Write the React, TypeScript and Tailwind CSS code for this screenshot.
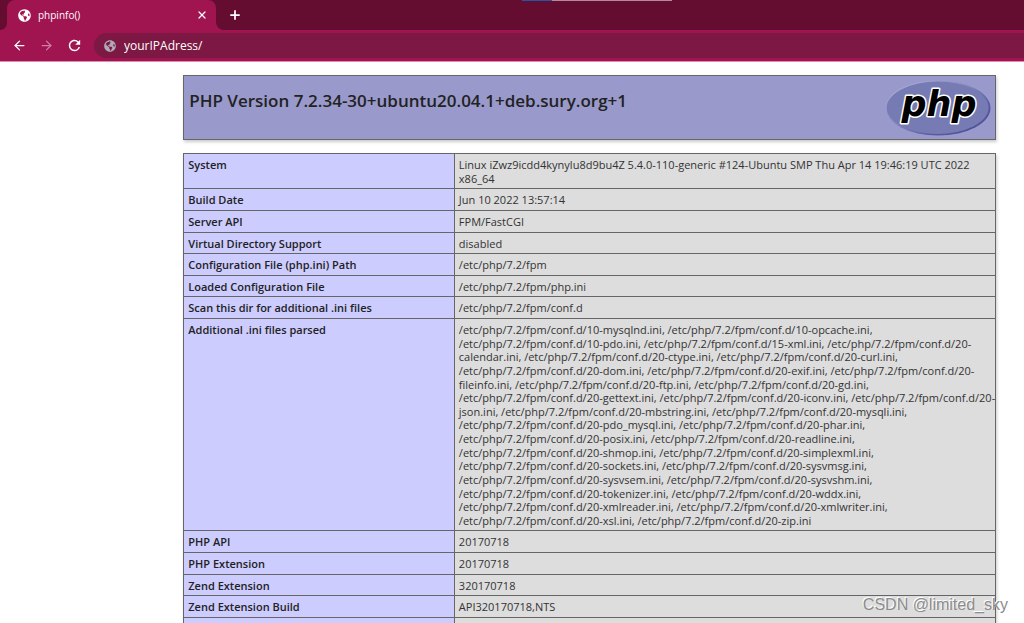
import { ArrowLeft, ArrowRight, Plus, X } from "lucide-react";
import { FaGlobeAmericas } from "react-icons/fa";
import { MdRefresh } from "react-icons/md";

interface InfoRow {
  name: string;
  lines: string[];
}

const infoRows: InfoRow[] = [
  {
    name: "System",
    lines: [
      "Linux iZwz9icdd4kynylu8d9bu4Z 5.4.0-110-generic #124-Ubuntu SMP Thu Apr 14 19:46:19 UTC 2022",
      "x86_64",
    ],
  },
  { name: "Build Date", lines: ["Jun 10 2022 13:57:14"] },
  { name: "Server API", lines: ["FPM/FastCGI"] },
  { name: "Virtual Directory Support", lines: ["disabled"] },
  { name: "Configuration File (php.ini) Path", lines: ["/etc/php/7.2/fpm"] },
  { name: "Loaded Configuration File", lines: ["/etc/php/7.2/fpm/php.ini"] },
  { name: "Scan this dir for additional .ini files", lines: ["/etc/php/7.2/fpm/conf.d"] },
  {
    name: "Additional .ini files parsed",
    lines: [
      "/etc/php/7.2/fpm/conf.d/10-mysqlnd.ini, /etc/php/7.2/fpm/conf.d/10-opcache.ini,",
      "/etc/php/7.2/fpm/conf.d/10-pdo.ini, /etc/php/7.2/fpm/conf.d/15-xml.ini, /etc/php/7.2/fpm/conf.d/20-",
      "calendar.ini, /etc/php/7.2/fpm/conf.d/20-ctype.ini, /etc/php/7.2/fpm/conf.d/20-curl.ini,",
      "/etc/php/7.2/fpm/conf.d/20-dom.ini, /etc/php/7.2/fpm/conf.d/20-exif.ini, /etc/php/7.2/fpm/conf.d/20-",
      "fileinfo.ini, /etc/php/7.2/fpm/conf.d/20-ftp.ini, /etc/php/7.2/fpm/conf.d/20-gd.ini,",
      "/etc/php/7.2/fpm/conf.d/20-gettext.ini, /etc/php/7.2/fpm/conf.d/20-iconv.ini, /etc/php/7.2/fpm/conf.d/20-",
      "json.ini, /etc/php/7.2/fpm/conf.d/20-mbstring.ini, /etc/php/7.2/fpm/conf.d/20-mysqli.ini,",
      "/etc/php/7.2/fpm/conf.d/20-pdo_mysql.ini, /etc/php/7.2/fpm/conf.d/20-phar.ini,",
      "/etc/php/7.2/fpm/conf.d/20-posix.ini, /etc/php/7.2/fpm/conf.d/20-readline.ini,",
      "/etc/php/7.2/fpm/conf.d/20-shmop.ini, /etc/php/7.2/fpm/conf.d/20-simplexml.ini,",
      "/etc/php/7.2/fpm/conf.d/20-sockets.ini, /etc/php/7.2/fpm/conf.d/20-sysvmsg.ini,",
      "/etc/php/7.2/fpm/conf.d/20-sysvsem.ini, /etc/php/7.2/fpm/conf.d/20-sysvshm.ini,",
      "/etc/php/7.2/fpm/conf.d/20-tokenizer.ini, /etc/php/7.2/fpm/conf.d/20-wddx.ini,",
      "/etc/php/7.2/fpm/conf.d/20-xmlreader.ini, /etc/php/7.2/fpm/conf.d/20-xmlwriter.ini,",
      "/etc/php/7.2/fpm/conf.d/20-xsl.ini, /etc/php/7.2/fpm/conf.d/20-zip.ini",
    ],
  },
  { name: "PHP API", lines: ["20170718"] },
  { name: "PHP Extension", lines: ["20170718"] },
  { name: "Zend Extension", lines: ["320170718"] },
  { name: "Zend Extension Build", lines: ["API320170718,NTS"] },
];

const PhpLogo = () => (
  <svg viewBox="0 0 108 58" className="h-[58px] w-[108px] shrink-0" role="img" aria-label="PHP logo">
    <defs>
      <linearGradient id="rim" x1="0" y1="0" x2="1" y2="1">
        <stop offset="0" stopColor="#b9bbe2" />
        <stop offset="0.45" stopColor="#8486c0" />
        <stop offset="0.7" stopColor="#5a5ca4" />
        <stop offset="1" stopColor="#44468f" />
      </linearGradient>
    </defs>
    <ellipse cx="54" cy="29" rx="52.5" ry="27.5" fill="url(#rim)" />
    <ellipse cx="53.6" cy="28.8" rx="51" ry="26.2" fill="#777bb3" />
    <text
      x="55"
      y="37"
      textAnchor="middle"
      fontFamily="DejaVu Sans, sans-serif"
      fontSize="35"
      fontWeight="bold"
      fontStyle="italic"
      fill="#000"
      stroke="#fff"
      strokeWidth="3"
      strokeLinejoin="round"
      paintOrder="stroke"
    >
      php
    </text>
  </svg>
);

const BrowserBar = () => (
  <header className="border-b border-[#e08db0] bg-[#650c31] text-white">
    <div className="relative flex h-[30px] items-end">
      <div className="absolute left-[522px] top-0 flex h-px w-[150px]">
        <span className="w-[30px] bg-[#2455a0]" />
        <span className="flex-1 bg-[#b58a9d]" />
      </div>
      <div className="h-full w-[7px] bg-[#a01450]">
        <div className="h-full rounded-br-lg bg-[#650c31]" />
      </div>
      <div className="flex h-full w-[209px] items-center rounded-t-lg bg-[#a01450] pl-[11px] pr-2">
        <FaGlobeAmericas className="size-[13px]" />
        <span className="ml-[7px] flex-1 text-[10px] leading-4">phpinfo()</span>
        <button type="button" aria-label="Close tab">
          <X className="size-3" strokeWidth={2.5} />
        </button>
      </div>
      <div className="h-full flex-1 bg-[#a01450]">
        <div className="flex h-full items-center rounded-bl-lg bg-[#650c31] pl-3">
          <button type="button" aria-label="New tab">
            <Plus className="size-[14px]" strokeWidth={3} />
          </button>
        </div>
      </div>
    </div>
    <div className="flex h-[31px] items-center bg-[#a01450] pl-3">
      <button type="button" aria-label="Back">
        <ArrowLeft className="size-[15px]" />
      </button>
      <button type="button" aria-label="Forward" className="ml-3 text-[#cd7fa0]">
        <ArrowRight className="size-[15px]" />
      </button>
      <button type="button" aria-label="Reload" className="ml-3">
        <MdRefresh className="size-[17px]" />
      </button>
      <label className="ml-[11px] flex h-[25px] flex-1 items-center gap-2 rounded-l-full bg-[#7c1843] pl-[10px]">
        <FaGlobeAmericas className="size-3 text-[#b0aab6]" />
        <input
          type="text"
          aria-label="Address"
          defaultValue="yourIPAdress/"
          className="min-w-0 flex-1 bg-transparent text-xs leading-5 font-medium outline-none"
        />
      </label>
    </div>
  </header>
);

const App = () => {
  return (
    <div className="relative h-screen overflow-hidden bg-white font-['Open_Sans','Noto_Sans',sans-serif] text-[#222]">
      <BrowserBar />
      <main className="flex flex-col gap-[13px] pl-[17.9%] pr-7 pt-[13px]">
        <div className="flex h-[65px] items-start justify-between border border-[#666] bg-[#9999cc] pl-[5px] pr-[3px] pt-[3px] shadow-[1px_2px_3px_#ccc]">
          <h1 className="pt-[10px] text-[17px] leading-6 font-semibold whitespace-nowrap">
            PHP Version 7.2.34-30+ubuntu20.04.1+deb.sury.org+1
          </h1>
          <PhpLogo />
        </div>
        <table className="w-full table-fixed border-collapse border border-[#666] text-[11px] leading-[1.24] shadow-[1px_2px_3px_#ccc]">
          <colgroup>
            <col className="w-1/3" />
            <col />
          </colgroup>
          <tbody>
            {infoRows.map((row) => (
              <tr key={row.name}>
                <th scope="row" className="border border-[#666] bg-[#ccccff] px-1 pt-1 pb-[3px] text-left align-top font-semibold">
                  {row.name}
                </th>
                <td className="border border-[#666] bg-[#dddddd] px-1 pt-1 pb-[3px] align-top text-[#333]">
                  {row.lines.map((line) => (
                    <span key={line} className="block whitespace-nowrap">
                      {line}
                    </span>
                  ))}
                </td>
              </tr>
            ))}
            <tr className="h-[22px]">
              <th className="border border-[#666] bg-[#ccccff]" />
              <td className="border border-[#666] bg-[#dddddd]" />
            </tr>
          </tbody>
        </table>
      </main>
      <p className="absolute right-4 bottom-2 font-['Liberation_Sans',sans-serif] text-base leading-5 text-[#8c8c8c] [text-shadow:-1px_-1px_0_#fff]">
        CSDN @limited_sky
      </p>
    </div>
  );
};

export default App;
